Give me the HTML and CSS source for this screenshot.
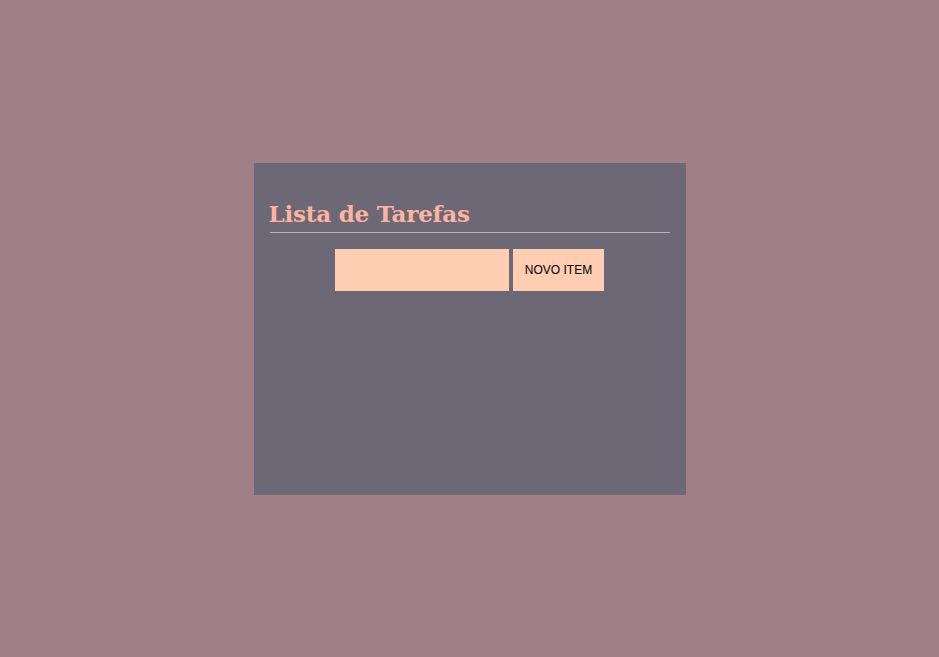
FILE: index.html
```html
<!DOCTYPE html>
<html lang="pt">
<head>
<meta charset="utf-8">
<title>Lista de Tarefas</title>
<link rel="stylesheet" href="styles.css">
</head>
<body>
<main class="card">
  <h1 class="title">Lista de Tarefas</h1>
  <div class="rule"></div>
  <form class="form">
    <input class="field" type="text">
    <button class="btn" type="button">NOVO ITEM</button>
  </form>
</main>
</body>
</html>
```
FILE: styles.css
```css
html, body {
  margin: 0;
  padding: 0;
  height: 100%;
}
body {
  background: #9f8086;
  display: flex;
  justify-content: center;
  align-items: flex-start;
  font-family: "Liberation Sans", Arial, sans-serif;
}
.card {
  margin-top: 163px;
  width: 432px;
  height: 332px;
  box-sizing: border-box;
  background: #6d6875;
  padding: 37px 16px 0;
}
.title {
  margin: 0 0 0 -1px;
  font-family: "DejaVu Serif", serif;
  font-weight: bold;
  font-size: 23px;
  line-height: 28px;
  color: #ffb4a2;
  letter-spacing: -0.2px;
}
.rule {
  height: 1px;
  background: #b8b4b8;
  margin-top: 4px;
}
.form {
  display: flex;
  justify-content: center;
  gap: 4px;
  margin-top: 16px;
}
.field {
  width: 174px;
  height: 42px;
  box-sizing: border-box;
  border: none;
  background: #ffcdb2;
  margin: 0;
  padding: 0 8px;
}
.btn {
  width: 91px;
  height: 42px;
  border: none;
  background: #ffcdb2;
  font-family: "Liberation Sans", Arial, sans-serif;
  font-size: 12px;
  color: #000;
  margin: 0;
  padding: 0;
}
```
